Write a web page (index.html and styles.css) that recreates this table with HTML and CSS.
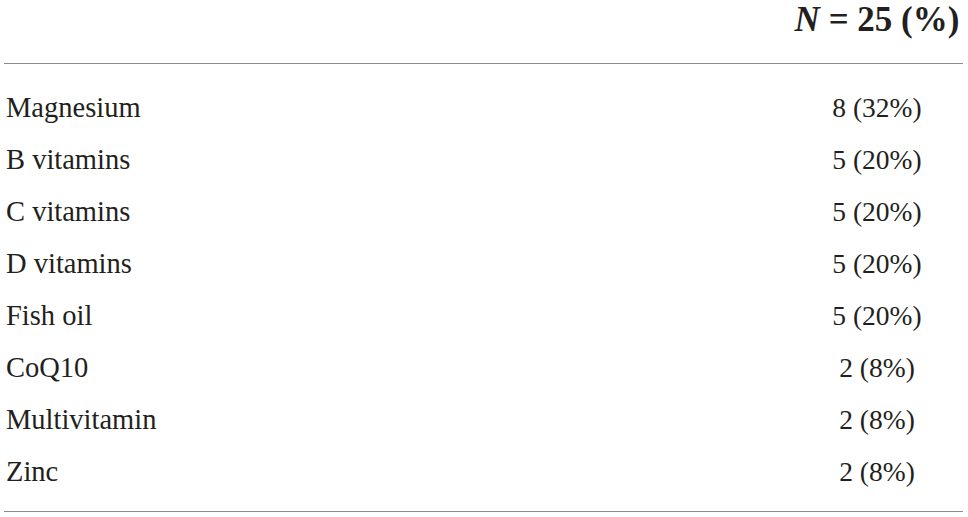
FILE: index.html
```html
<!DOCTYPE html>
<html lang="en">
<head>
  <meta charset="UTF-8">
  <meta name="viewport" content="width=device-width, initial-scale=1.0">
  <title>Supplements</title>
  <link rel="stylesheet" href="styles.css">
</head>
<body>
  <table class="supp-table">
    <thead>
      <tr>
        <th class="name-col"></th>
        <th class="count-col"><em>N</em> = 25 (%)</th>
      </tr>
    </thead>
    <tbody>
      <tr><td class="name-col">Magnesium</td><td class="count-col">8 (32%)</td></tr>
      <tr><td class="name-col">B vitamins</td><td class="count-col">5 (20%)</td></tr>
      <tr><td class="name-col">C vitamins</td><td class="count-col">5 (20%)</td></tr>
      <tr><td class="name-col">D vitamins</td><td class="count-col">5 (20%)</td></tr>
      <tr><td class="name-col">Fish oil</td><td class="count-col">5 (20%)</td></tr>
      <tr><td class="name-col">CoQ10</td><td class="count-col">2 (8%)</td></tr>
      <tr><td class="name-col">Multivitamin</td><td class="count-col">2 (8%)</td></tr>
      <tr><td class="name-col">Zinc</td><td class="count-col">2 (8%)</td></tr>
    </tbody>
  </table>
</body>
</html>
```

FILE: styles.css
```css
body {
  margin: 0;
  background-color: #fff;
  font-family: 'Liberation Serif', 'Times New Roman', serif;
  color: #231f20;
}

.supp-table {
  border-collapse: collapse;
  width: 959px;
  margin-left: 4px;
}

.supp-table th {
  font-size: 35px;
  font-weight: bold;
  line-height: 40px;
  padding: 0 0 23px;
  border-bottom: 1px solid #8c8c8c;
}

.supp-table th em {
  font-style: italic;
}

.supp-table td {
  font-size: 28.5px;
  line-height: 52px;
  padding: 0;
}

.supp-table td.count-col {
  font-size: 27.5px;
}

.supp-table tbody tr:first-child td {
  padding-top: 18px;
}

.supp-table tbody tr:last-child td {
  padding-bottom: 13px;
  border-bottom: 1px solid #8c8c8c;
}

.name-col {
  text-align: left;
  padding-left: 2px !important;
}

.count-col {
  width: 172px;
  text-align: center;
}
```
